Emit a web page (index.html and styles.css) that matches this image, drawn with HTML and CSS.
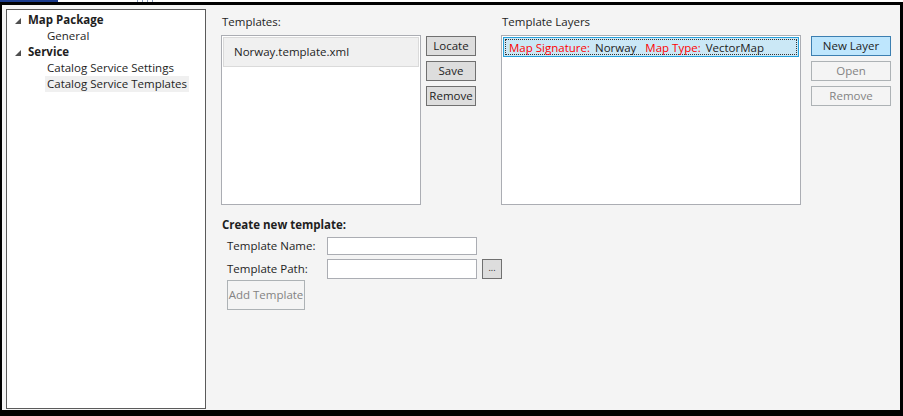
FILE: index.html
```html
<!DOCTYPE html>
<html>
<head>
<meta charset="utf-8">
<link rel="stylesheet" href="styles.css">
</head>
<body>
<div class="topstrip">
  <div class="tab-hl"></div>
  <div class="tab-icon"><span></span><span></span><span></span><span></span></div>
</div>
<div class="frame">
  <div class="tree">
    <div class="row lvl0"><svg class="arrow" width="6" height="6" viewBox="0 0 6 6"><polygon points="6,0 6,6 0,6" fill="#4f4f4f"/></svg><span class="bold">Map Package</span></div>
    <div class="row lvl1"><span class="txt">General</span></div>
    <div class="row lvl0"><svg class="arrow" width="6" height="6" viewBox="0 0 6 6"><polygon points="6,0 6,6 0,6" fill="#4f4f4f"/></svg><span class="bold">Service</span></div>
    <div class="row lvl1"><span class="txt">Catalog Service Settings</span></div>
    <div class="row lvl1"><span class="txt sel">Catalog Service Templates</span></div>
  </div>
  <div class="main">
    <div class="top-row">
      <div class="group g1">
        <div class="label">Templates:</div>
        <div class="group-body">
          <div class="listbox lb1">
            <div class="item-t">Norway.template.xml</div>
          </div>
          <div class="btn-col bc1">
            <div class="btn">Locate</div>
            <div class="btn">Save</div>
            <div class="btn">Remove</div>
          </div>
        </div>
      </div>
      <div class="group g2">
        <div class="label">Template Layers</div>
        <div class="group-body">
          <div class="listbox lb2">
            <div class="item-l"><div class="focus"><span class="red">Map Signature:</span><span class="val">Norway</span><span class="red">Map Type:</span><span class="val">VectorMap</span></div></div>
          </div>
          <div class="btn-col bc2">
            <div class="btn primary">New Layer</div>
            <div class="btn disabled">Open</div>
            <div class="btn disabled">Remove</div>
          </div>
        </div>
      </div>
    </div>
    <div class="create">
      <div class="create-title">Create new template:</div>
      <div class="form">
        <div class="frow"><span class="flabel">Template Name:</span><div class="input"></div></div>
        <div class="frow"><span class="flabel">Template Path:</span><div class="input"></div><div class="btn dots">...</div></div>
        <div class="btn disabled add">Add Template</div>
      </div>
    </div>
  </div>
</div>
</body>
</html>
```

FILE: styles.css
```css
* { box-sizing: border-box; }
html, body { margin: 0; padding: 0; }
body {
  background: #ffffff;
  font-family: "Open Sans", "Noto Sans", sans-serif;
  font-size: 11.5px;
  color: #1e1e1e;
  width: 903px;
  height: 416px;
  overflow: hidden;
}
.topstrip {
  height: 2px;
  display: flex;
  position: relative;
}
.tab-hl { width: 58px; height: 2px; background: #1a3a8c; }
.tab-icon { margin-left: 79px; display: flex; gap: 4px; }
.tab-icon span { width: 1px; height: 2px; background: #8a9bbd; }
.frame {
  height: 414px;
  border-style: solid;
  border-color: #000;
  border-width: 3px 3px 6px 2px;
  background: #f4f4f4;
  display: flex;
  align-items: flex-start;
}
.tree {
  margin: 4px 0 0 4px;
  width: 200px;
  height: 400px;
  background: #fff;
  border: 1px solid #5a5a5a;
  padding-top: 2px;
}
.row {
  height: 16px;
  line-height: 16px;
  display: flex;
  align-items: center;
  white-space: nowrap;
}
.lvl0 { padding-left: 8px; }
.arrow { margin-right: 7px; margin-top: 1px; }
.bold { font-weight: 700; }
.lvl1 { padding-left: 38px; }
.txt { padding: 0 2px; }
.txt.sel { background: #f0f0f0; }
.main {
  margin-left: 15px;
  padding-top: 9px;
  flex: 1;
}
.top-row { display: flex; }
.label { height: 16px; line-height: 16px; margin-bottom: 5px; padding-left: 1px; }
.group-body { display: flex; align-items: flex-start; }
.listbox {
  background: #fff;
  border: 1px solid #abadb3;
  height: 170px;
  padding: 1px;
}
.lb1 { width: 200px; }
.lb2 { width: 300px; }
.g2 { margin-left: 25px; }
.item-t {
  height: 30px;
  line-height: 28px;
  background: #f0f0f0;
  border: 1px solid #dadada;
  padding-left: 10px;
}
.item-l {
  height: 20px;
  background: #cbe8f6;
  border: 1px solid #26a0da;
  padding: 1px;
}
.focus {
  height: 16px;
  line-height: 15px;
  border: 1px dotted #333;
  padding-left: 3px;
  white-space: nowrap;
}
.red { color: #ff0000; margin-right: 5px; }
.val { margin-right: 9px; color: #222; }
.btn-col { display: flex; flex-direction: column; gap: 5px; padding-top: 1px; }
.bc1 { margin-left: 5px; width: 50px; }
.bc2 { margin-left: 10px; width: 80px; }
.btn {
  height: 20px;
  line-height: 18px;
  text-align: center;
  background: #dddddd;
  border: 1px solid #707070;
  color: #1e1e1e;
  white-space: nowrap;
}
.btn.primary { background: #bee6fd; border-color: #3c7fb1; }
.btn.disabled { background: #f4f4f4; border-color: #adb2b5; color: #838383; }
.create { margin-top: 12px; }
.create-title { font-weight: 700; height: 16px; line-height: 16px; padding-left: 1px; }
.form { padding-left: 6px; margin-top: 1px; }
.frow { display: flex; align-items: center; height: 23px; }
.flabel { width: 100px; }
.input { width: 150px; height: 18px; background: #fff; border: 1px solid #abadb3; }
.frow + .frow .input { height: 20px; }
.dots { width: 20px; height: 20px; margin-left: 5px; font-size: 9px; line-height: 16px; }
.add { width: 78px; height: 30px; line-height: 28px; margin-top: 0; }
```
